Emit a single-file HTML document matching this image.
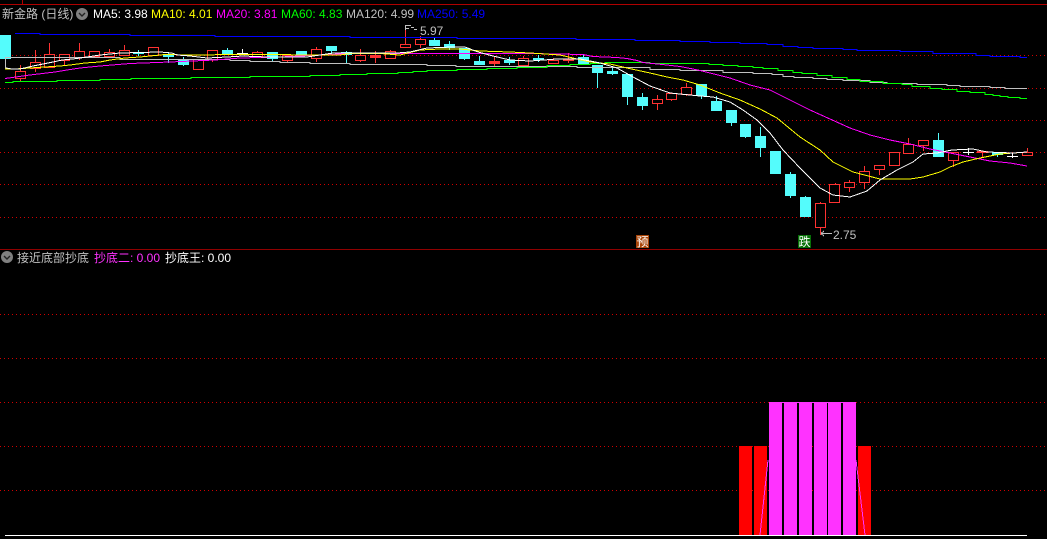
<!DOCTYPE html>
<html><head><meta charset="utf-8"><style>
html,body{margin:0;padding:0;background:#000;width:1047px;height:539px;overflow:hidden}
svg{display:block;position:absolute;left:0;top:0}
text{font-family:"Liberation Sans","WenQuanYi Zen Hei","Noto Sans CJK SC",sans-serif;font-size:12px}
</style></head><body>
<svg width="1047" height="539" viewBox="0 0 1047 539" xmlns="http://www.w3.org/2000/svg">
<rect width="1047" height="539" fill="#000"/>
<g shape-rendering="crispEdges" fill="none">
<path d="M0 4.5H1047M22.5 0V4" stroke="#b00000"/>
<path d="M0 249.5H1047" stroke="#900000"/>
<path d="M0 55.5H1047M0 88.5H1047M0 120.5H1047M0 152.5H1047M0 184.5H1047M0 217.5H1047M0 314.5H1047M0 358.5H1047M0 402.5H1047M0 446.5H1047M0 490.5H1047" stroke="#d00000" stroke-dasharray="1 3"/>

<!-- cyan wicks -->
<path stroke="#54fcfc" d="M5.5 59V69M138.5 50V56M168.5 52V63M183.5 57V66M227.5 48V54M272.5 52V61M331.5 46V54M346.5 51V63M434.5 38V46M449.5 41V50M464.5 48V60M479.5 56V65M509.5 57V65M538.5 55V62M583.5 54V65M597.5 65V88M612.5 67V75M627.5 74V105M642.5 93V110M701.5 84V99M716.5 96V111M731.5 110V126M745.5 124V138M760.5 127V157M790.5 172V198M805.5 196V217M938.5 133V157M997.5 152V157"/>
<!-- cyan bodies -->
<path fill="#54fcfc" d="M0 35h11V59H0zM133 52h11v2h-11zM163 54h11v3h-11zM178 59h11v6h-11zM222 50h11v4h-11zM267 52h11v7h-11zM296 51h11v4h-11zM326 46h11v5h-11zM341 52h11v3h-11zM429 40h11v6h-11zM444 44h11v4h-11zM459 48h11v11h-11zM474 61h11v4h-11zM504 60h11v3h-11zM533 58h11v2h-11zM578 57h11v8h-11zM592 65h11v8h-11zM607 71h11v3h-11zM622 74h11v23h-11zM637 97h11v9h-11zM696 84h11v12h-11zM711 101h11v10h-11zM726 110h11v13h-11zM740 124h11v13h-11zM755 136h11v12h-11zM770 151h11v23h-11zM785 174h11v22h-11zM800 197h11v20h-11zM933 140h11v17h-11zM992 152h11v3h-11z"/>
<!-- red wicks -->
<path stroke="#ff3232" d="M20.5 65V71M20.5 78V82M35.5 50V62M35.5 68V72M49.5 43V54M49.5 67V68M64.5 60V65M79.5 43V51M79.5 57V60M94.5 56V58M109.5 49V52M109.5 56V57M124.5 45V50M212.5 59V62M257.5 51V52M287.5 60V62M316.5 47V49M316.5 58V62M360.5 49V55M360.5 60V62M375.5 51V63M390.5 50V51M405.5 29V44M420.5 36V39M420.5 44V48M494.5 57V66M523.5 56V58M553.5 58V60M568.5 53V63M657.5 95V99M657.5 103V110M671.5 99V101M686.5 83V87M686.5 94V96M820.5 202V203M820.5 227V235M835.5 183V184M849.5 180V182M849.5 187V192M864.5 166V171M864.5 182V189M879.5 169V175M908.5 138V144M923.5 145V151M953.5 160V167M982.5 151V157M1027.5 148V152"/>
<!-- red hollow bodies -->
<path stroke="#ff3232" fill="#000" d="M15.5 71.5h10V78.5H15.5ZM30.5 62.5h10V68.5H30.5ZM44.5 54.5h10V67.5H44.5ZM59.5 54.5h10V60.5H59.5ZM74.5 51.5h10V57.5H74.5ZM89.5 51.5h10V56.5H89.5ZM104.5 52.5h10V56.5H104.5ZM119.5 50.5h10V55.5H119.5ZM148.5 47.5h10V55.5H148.5ZM193.5 59.5h10V69.5H193.5ZM207.5 50.5h10V59.5H207.5ZM252.5 52.5h10V56.5H252.5ZM282.5 55.5h10V60.5H282.5ZM311.5 49.5h10V58.5H311.5ZM355.5 55.5h10V60.5H355.5ZM385.5 51.5h10V58.5H385.5ZM400.5 44.5h10V47.5H400.5ZM415.5 39.5h10V44.5H415.5ZM518.5 58.5h10V65.5H518.5ZM548.5 60.5h10V63.5H548.5ZM652.5 99.5h10V103.5H652.5ZM666.5 93.5h10V99.5H666.5ZM681.5 87.5h10V94.5H681.5ZM815.5 203.5h10V227.5H815.5ZM829.5 184.5h10V202.5H829.5ZM844.5 182.5h10V187.5H844.5ZM859.5 171.5h10V182.5H859.5ZM874.5 165.5h10V169.5H874.5ZM889.5 152.5h10V165.5H889.5ZM903.5 144.5h10V153.5H903.5ZM918.5 140.5h10V145.5H918.5ZM948.5 152.5h10V160.5H948.5ZM1022.5 152.5h10V155.5H1022.5Z"/>
<!-- red solid -->
<path fill="#ff3232" d="M370 55h11v3h-11zM489 61h11v3h-11zM563 59h11v2h-11zM977 151h11v2h-11z"/>
<!-- white crosses -->
<path stroke="#fff" d="M237 53.5H248M242.5 49V55M963 152.5H974M968.5 148V155M1007 156.5H1018M1012.5 153V158"/>

<!-- MA250 -->
<path stroke="#0000ff" d="M15 33.5H40V34.5H130V35.5H215V36.5H350V37.5H457V38.5H576V39.5H635V40.5H680V41.5H710V42.5H740V43.5H767V44.5H783V46.5H798V47.5H813V48.5H843V49.5H857V50.5H900V51.5H933V53.5H976V55.5H990V56.5H1020V57.5H1027"/>
<!-- MA120 -->
<path stroke="#c0c0c0" d="M5.5 69V57.5H120V59.5H230V60.5H250V61.5H280V62.5H310V63.5H350V64.5H427V65.5H456V66.5H577V67.5H650V69.5H680V70.5H723V72.5H753V73.5H772V74.5H783V76.5H794V77.5H813V78.5H827V79.5H843V80.5H870V82.5H887V83.5H917V84.5H947V85.5H960V86.5H990V87.5H1005V88.5H1027"/>
<!-- MA60 -->
<path stroke="#00ff00" d="M5 82.5H13V81.5H57V80.5H100V79.5H131V78.5H191V77.5H250V76.5H310V75.5H340V74.5H367V73.5H398V72.5H413V71.5H427V70.5H457V69.5H487V68.5H517V67.5H547V65.5H570V64.5H590V63.5H605V62.5H650V63.5H709V64.5H723V65.5H738V66.5H753V67.5H763V68.5H778V70.5H793V72.5H802V73.5H817V75.5H832V77.5H847V79.5H860V81.5H883V83.5H902V84.5H912V86.5H930V88.5H942V89.5H957V91.5H970V92.5H985V94.5H993V95.5H1000V96.5H1008V97.5H1020V98.5H1027"/>
<!-- MA20 -->
<polyline stroke="#ff00ff" points="5,78.5 30,75 55,72 67,70 80,68 100,66 130,63.5 170,62 215,60 240,58 280,57 320,55 350,53.5 530,53.5 583,54.5 593,56.5 617,57.5 627,58.5 637,60.5 643,62.5 667,65 680,66.5 693,69 700,70.5 710,73 730,78 750,85 770,90 790,100 810,110 830,119 850,128 870,135 890,140 910,144 930,149 950,153 970,157 990,161 1010,163 1027,166"/>
<!-- MA10 -->
<polyline stroke="#ffff00" points="5,69 15,69 30,68 45,67 60,66 70,65 85,63 100,62 110,60 125,58 140,57 150,56 165,54.5 190,55 240,54.5 340,55 350,53.5 380,53.5 400,55 420,50 440,49 460,49 480,51 510,52 530,53 560,55 577,59 590,62 610,64 627,68 650,73 667,77 683,80 700,85 720,93 740,100 760,109 777,118 800,137 820,150 833,162 853,172 880,179 910,179 923,177 940,172 950,167 963,162 980,158 1000,154 1027,152"/>
<!-- MA5 -->
<polyline stroke="#ffffff" points="6,68 12,69 20,69 33,66 43,64 53,62 62,60 73,59 87,57 100,55 120,53 160,52 172,53 177,55 190,56 207,58 227,57 243,56 267,57 307,57 333,53 350,53 397,53 410,52 427,48 453,47 465,47 478,52 493,56 510,60 530,61 557,59 580,59 600,63 617,68 633,77 650,86 670,93 700,96 713,97 730,102 743,110 757,120 770,133 783,150 800,168 820,188 833,195 850,197 867,191 880,180 897,170 913,162 923,154 937,153 952,150 973,149 987,152 1013,153 1027,152"/>
</g>

<!-- high / low markers -->
<g fill="none" stroke="#c0c0c0" shape-rendering="crispEdges">
<path d="M405.5 25V30M405.5 25.5H411M405.5 28.5H409M411 27.5H414M414 29.5H417"/>
<path d="M821 233.5H832M821 233.5L824 231M821 233.5L824 236"/>
</g>
<text x="420" y="35" fill="#c0c0c0">5.97</text>
<text x="833" y="239" fill="#c0c0c0">2.75</text>

<!-- badges -->
<rect x="636" y="235" width="13" height="13" fill="#a84408"/>
<text x="636.5" y="246" fill="#fff">预</text>
<rect x="798" y="235" width="13" height="13" fill="#067006"/>
<text x="798.5" y="246" fill="#fff">跌</text>

<!-- header top -->
<text x="2" y="18" fill="#c0c0c0">新金路 (日线)</text>
<circle cx="82" cy="14" r="6" fill="#808080"/>
<path d="M79 13l3 3 3-3" fill="none" stroke="#222" stroke-width="1.4"/>
<text x="93" y="18" fill="#fff">MA5: 3.98</text>
<text x="151" y="18" fill="#ffff00">MA10: 4.01</text>
<text x="216" y="18" fill="#ff00ff">MA20: 3.81</text>
<text x="281" y="18" fill="#00ff00">MA60: 4.83</text>
<text x="346" y="18" fill="#c0c0c0">MA120: 4.99</text>
<text x="417" y="18" fill="#0000ff">MA250: 5.49</text>

<!-- lower panel header -->
<circle cx="7" cy="257" r="6" fill="#808080"/>
<path d="M4 256l3 3 3-3" fill="none" stroke="#222" stroke-width="1.4"/>
<text x="17" y="262" fill="#c0c0c0">接近底部抄底</text>
<text x="94" y="262" fill="#ff32ff">抄底二: 0.00</text>
<text x="165" y="262" fill="#fff">抄底王: 0.00</text>

<!-- lower panel bars -->
<g shape-rendering="crispEdges">
<path fill="#ff0000" d="M739 446h13v89h-13zM754 446h13v89h-13zM858 446h13v89h-13z"/>
<path fill="#ff32ff" d="M769 402h87v1h-87zM769 402h13v133h-13zM784 402h13v133h-13zM799 402h13v133h-13zM814 402h13v133h-13zM828 402h13v133h-13zM843 402h13v133h-13z"/>
<path d="M760 535L768 460M856 460L865 535" stroke="#ff32ff" fill="none"/>
<path d="M5 535.5H1027" stroke="#fff"/>
</g>
</svg>
</body></html>
